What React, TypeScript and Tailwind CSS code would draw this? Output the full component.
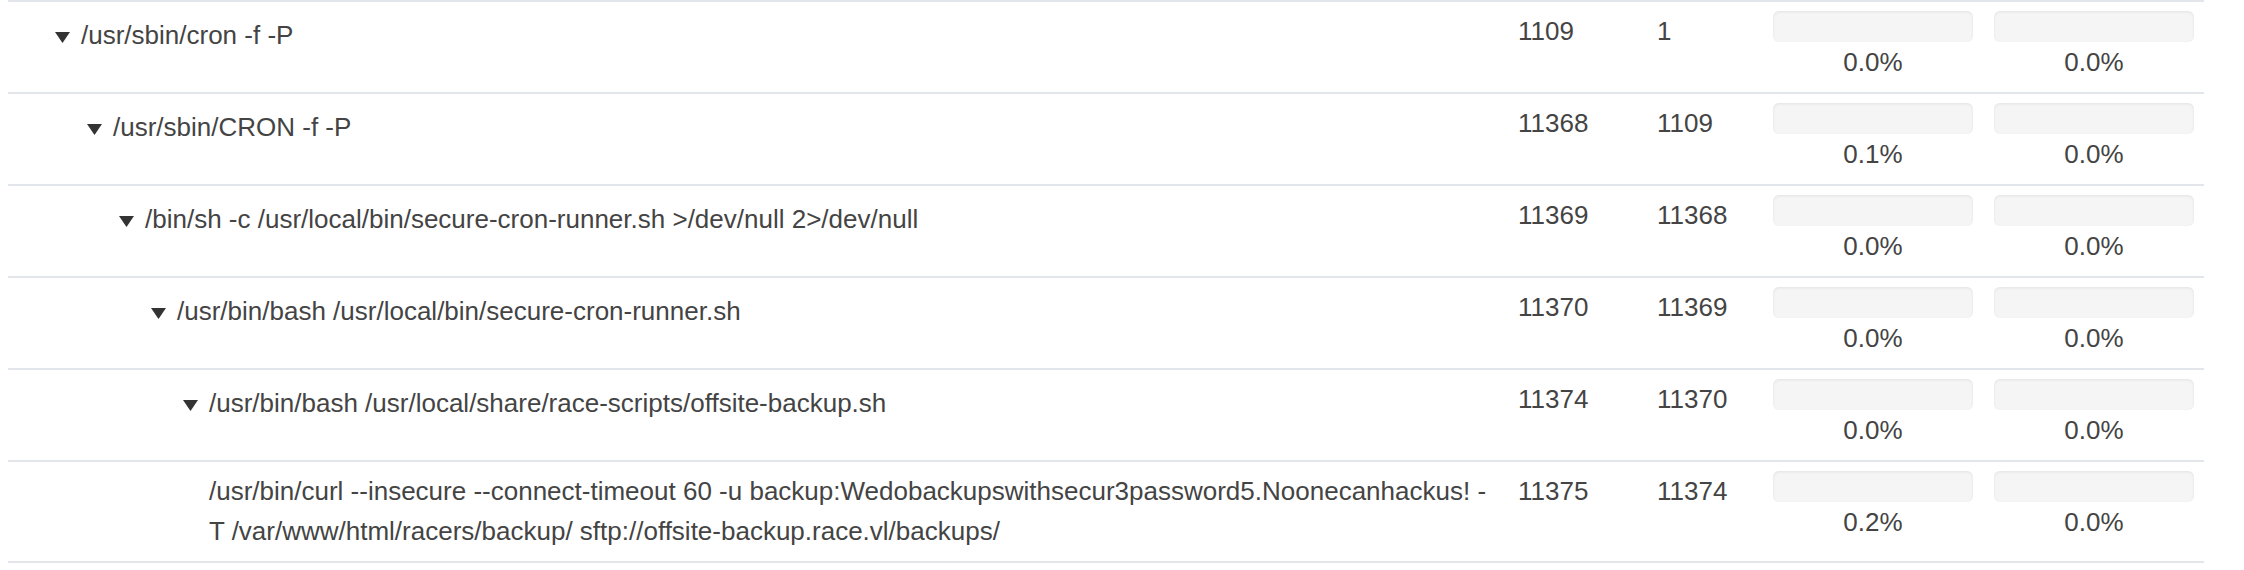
import type { ReactNode } from "react"

type Proc = {
  level: number
  cmd: string
  pid: string
  ppid: string
  cpu: string
  mem: string
  leaf?: boolean
}

const PROCS: Proc[] = [
  { level: 0, cmd: "/usr/sbin/cron -f -P", pid: "1109", ppid: "1", cpu: "0.0%", mem: "0.0%" },
  { level: 1, cmd: "/usr/sbin/CRON -f -P", pid: "11368", ppid: "1109", cpu: "0.1%", mem: "0.0%" },
  {
    level: 2,
    cmd: "/bin/sh -c /usr/local/bin/secure-cron-runner.sh >/dev/null 2>/dev/null",
    pid: "11369",
    ppid: "11368",
    cpu: "0.0%",
    mem: "0.0%",
  },
  {
    level: 3,
    cmd: "/usr/bin/bash /usr/local/bin/secure-cron-runner.sh",
    pid: "11370",
    ppid: "11369",
    cpu: "0.0%",
    mem: "0.0%",
  },
  {
    level: 4,
    cmd: "/usr/bin/bash /usr/local/share/race-scripts/offsite-backup.sh",
    pid: "11374",
    ppid: "11370",
    cpu: "0.0%",
    mem: "0.0%",
  },
  {
    level: 5,
    leaf: true,
    cmd: "/usr/bin/curl --insecure --connect-timeout 60 -u backup:Wedobackupswithsecur3password5.Noonecanhackus! -T /var/www/html/racers/backup/ sftp://offsite-backup.race.vl/backups/",
    pid: "11375",
    ppid: "11374",
    cpu: "0.2%",
    mem: "0.0%",
  },
]

function Caret() {
  return (
    <svg width="15" height="11" viewBox="0 0 15 11" className="inline-block align-[1px] mr-[11px]">
      <path d="M0 0 H15 L7.5 11 Z" fill="#333" />
    </svg>
  )
}

function Usage({ value }: { value: string }) {
  return (
    <div className="w-[200px]">
      <div className="h-[31px] rounded-[6px] bg-[#f5f5f5] shadow-[inset_0_1px_3px_rgba(0,0,0,0.08)]" />
      <div className="text-center">{value}</div>
    </div>
  )
}

function Cell({ className, children }: { className: string; children: ReactNode }) {
  return <div className={`pt-[9px] pb-[10px] ${className}`}>{children}</div>
}

export default function App() {
  return (
    <div className="min-h-screen bg-white">
      <div
        className="ml-[8px] w-[2196px] border-b-2 border-[#e2e6ea] text-[26px] leading-[40px] text-[#444]"
        style={{ fontFamily: '"Liberation Sans", Arial, sans-serif' }}
      >
        {PROCS.map((p) => (
          <div key={p.pid} className="flex border-t-2 border-[#e2e6ea]">
            {/* indentation follows the tree depth */}
            <Cell className={`flex-1 pr-[18px] ${p.leaf ? "pl-[201px]" : ""}`}>
              <div
                className={p.leaf ? "" : "pt-[4px]"}
                style={p.leaf ? undefined : { paddingLeft: 47 + p.level * 32 }}
              >
                {!p.leaf && <Caret />}
                {p.cmd}
              </div>
            </Cell>
            <Cell className="w-[139px]">{p.pid}</Cell>
            <Cell className="w-[116px]">{p.ppid}</Cell>
            <Cell className="w-[221px]">
              <Usage value={p.cpu} />
            </Cell>
            <Cell className="w-[210px]">
              <Usage value={p.mem} />
            </Cell>
          </div>
        ))}
      </div>
    </div>
  )
}
